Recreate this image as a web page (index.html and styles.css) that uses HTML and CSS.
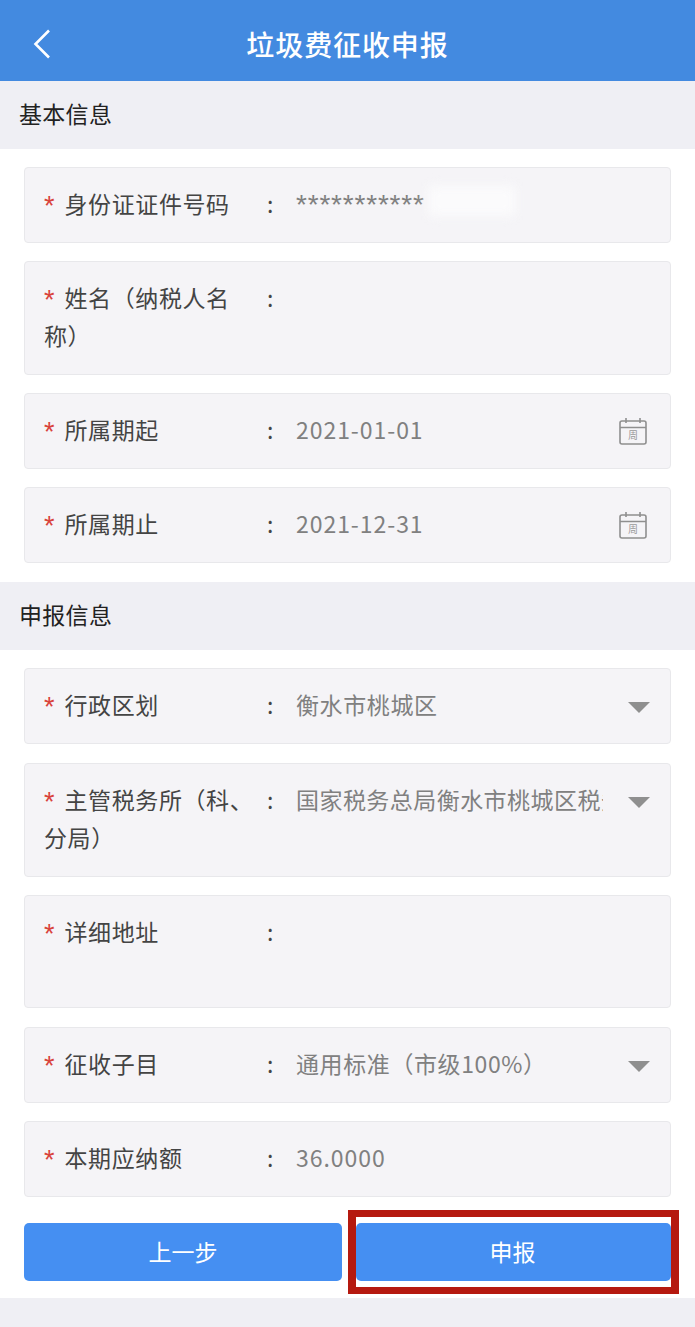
FILE: index.html
```html
<!DOCTYPE html>
<html lang="zh-CN">
<head>
    <meta charset="UTF-8">
    <meta name="viewport" content="width=device-width, initial-scale=1.0">
    <title>垃圾费征收申报</title>
    <link rel="stylesheet" href="styles.css">
</head>
<body>
    <header class="topbar">
        <svg class="back" width="18" height="30" viewBox="0 0 18 30"><path d="M16 1.5 2.5 15 16 28.5" fill="none" stroke="#fff" stroke-width="2.6"/></svg>
        <h1>垃圾费征收申报</h1>
    </header>

    <div class="section-head">基本信息</div>
    <section class="rows first">
        <div class="row">
            <div class="label"><i>*</i>身份证证件号码</div>
            <div class="colon">:</div>
            <div class="value masked">***********<span class="blur"></span></div>
        </div>
        <div class="row">
            <div class="label"><i>*</i>姓名（纳税人名<br>称）</div>
            <div class="colon">:</div>
            <div class="value"></div>
        </div>
        <div class="row">
            <div class="label"><i>*</i>所属期起</div>
            <div class="colon">:</div>
            <div class="value num">2021-01-01</div>
            <svg class="cal" width="28" height="28" viewBox="0 0 28 28"><g fill="none" stroke="#8f8f8f" stroke-width="1.6"><rect x="1" y="4" width="26" height="23" rx="2"/><path d="M1 10.5h26M7 1v5M21 1v5"/></g><text x="14" y="22" text-anchor="middle" class="cal-text">周</text></svg>
        </div>
        <div class="row">
            <div class="label"><i>*</i>所属期止</div>
            <div class="colon">:</div>
            <div class="value num">2021-12-31</div>
            <svg class="cal" width="28" height="28" viewBox="0 0 28 28"><g fill="none" stroke="#8f8f8f" stroke-width="1.6"><rect x="1" y="4" width="26" height="23" rx="2"/><path d="M1 10.5h26M7 1v5M21 1v5"/></g><text x="14" y="22" text-anchor="middle" class="cal-text">周</text></svg>
        </div>
    </section>

    <div class="section-head">申报信息</div>
    <section class="rows">
        <div class="row">
            <div class="label"><i>*</i>行政区划</div>
            <div class="colon">:</div>
            <div class="value">衡水市桃城区</div>
            <span class="arrow"></span>
        </div>
        <div class="row">
            <div class="label"><i>*</i>主管税务所（科、分局）</div>
            <div class="colon">:</div>
            <div class="value clip">国家税务总局衡水市桃城区税务局</div>
            <span class="arrow"></span>
        </div>
        <div class="row tall">
            <div class="label"><i>*</i>详细地址</div>
            <div class="colon">:</div>
            <div class="value"></div>
        </div>
        <div class="row">
            <div class="label"><i>*</i>征收子目</div>
            <div class="colon">:</div>
            <div class="value">通用标准（市级100%）</div>
            <span class="arrow"></span>
        </div>
        <div class="row">
            <div class="label"><i>*</i>本期应纳额</div>
            <div class="colon">:</div>
            <div class="value num">36.0000</div>
        </div>
    </section>

    <div class="actions">
        <button>上一步</button>
        <button class="marked">申报</button>
    </div>
</body>
</html>
```

FILE: styles.css
```css
* {
    box-sizing: border-box;
}

body {
    margin: 0;
    min-height: 1327px;
    background-color: #efeff4;
    font-family: "Noto Sans CJK SC", "Liberation Sans", sans-serif;
    font-size: 23px;
}

.topbar {
    position: relative;
    height: 81px;
    display: flex;
    align-items: center;
    justify-content: center;
    background-color: #438ae0;
}

.topbar h1 {
    margin: 7px 0 0;
    color: #fff;
    font-size: 28px;
    font-weight: 500;
    letter-spacing: 0.9px;
}

.back {
    position: absolute;
    left: 33px;
    top: 29px;
}

.section-head {
    height: 68px;
    padding-left: 19px;
    line-height: 65px;
    color: #222;
    background-color: #efeff4;
    letter-spacing: 0.3px;
}

.rows {
    display: grid;
    gap: 18.5px;
    padding: 18px 24px;
    background-color: #fff;
}

.rows.first {
    gap: 18px;
    padding-bottom: 19px;
}

.row {
    display: flex;
    align-items: flex-start;
    min-height: 76px;
    padding: 16px 20px 20px 19px;
    background-color: #f5f4f7;
    border: 1.5px solid #e8e8eb;
    border-radius: 4px;
    line-height: 38px;
}

.row.tall {
    min-height: 113px;
}

.label {
    width: 223px;
    flex-shrink: 0;
    color: #444;
    letter-spacing: 0.6px;
}

.label i {
    display: inline-block;
    width: 20.5px;
    height: 38px;
    padding-top: 3px;
    color: #d9423a;
    font-family: "Liberation Sans", sans-serif;
    font-size: 27px;
    font-style: normal;
    vertical-align: top;
}

.colon {
    width: 29px;
    flex-shrink: 0;
    color: #444;
}

.value {
    position: relative;
    flex: 1;
    min-width: 0;
    color: #808080;
    letter-spacing: 0.6px;
}

.value.num {
    letter-spacing: 0.95px;
}

.value.masked {
    padding-top: 4px;
    line-height: 34px;
    font-family: "Liberation Sans", sans-serif;
    font-size: 28px;
    letter-spacing: 0.8px;
}

.value.clip {
    overflow: hidden;
    white-space: nowrap;
    flex: none;
    width: 307px;
    letter-spacing: 0.45px;
}

.blur {
    position: absolute;
    left: 132px;
    top: 2px;
    width: 88px;
    height: 30px;
    background-color: #fbfbfc;
    filter: blur(6px);
}

.cal {
    flex-shrink: 0;
    margin: 7px 3px 0 0;
}

.cal-text {
    font-size: 10px;
    fill: #9a9a9a;
}

.arrow {
    flex-shrink: 0;
    width: 0;
    height: 0;
    margin: 17px 0 0 auto;
    border-left: 11px solid transparent;
    border-right: 11px solid transparent;
    border-top: 11px solid #8f8f8f;
}

.actions {
    display: flex;
    gap: 14px;
    padding: 8px 24px 17px;
    background-color: #fff;
}

.actions button {
    position: relative;
    height: 58px;
    padding: 0 0 2px;
    border: none;
    border-radius: 5px;
    background-color: #458ff2;
    color: #fff;
    font-family: inherit;
    font-size: 23px;
}

.actions button:first-child {
    width: 318px;
}

.actions button.marked {
    width: 315px;
    padding-right: 2px;
}

/* red frame drawn on top of the screenshot */
.marked::after {
    content: "";
    position: absolute;
    left: -8px;
    right: -8px;
    top: -13px;
    bottom: -13px;
    border: 7px solid #b5190f;
    border-left-width: 8px;
    border-right-width: 8px;
}
```
